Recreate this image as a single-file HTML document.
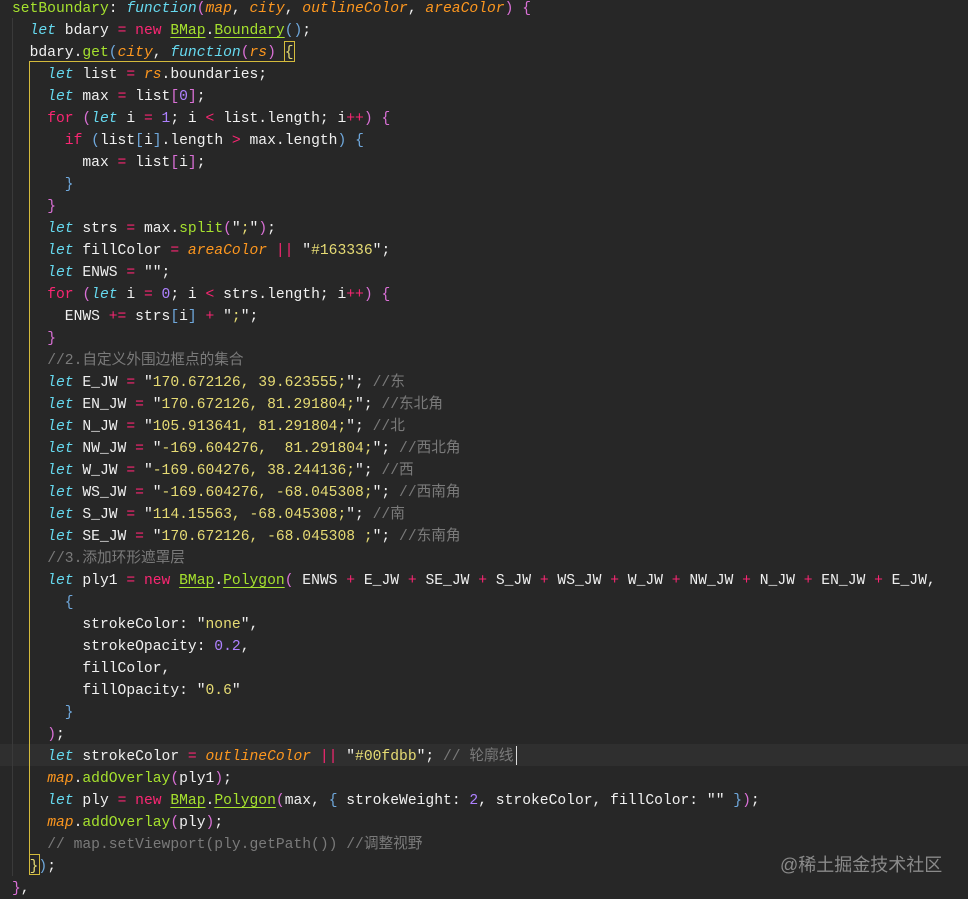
<!DOCTYPE html>
<html><head><meta charset="utf-8"><style>
html,body{margin:0;padding:0;background:#272727;width:968px;height:899px;overflow:hidden;position:relative}
pre{margin:0;position:absolute;left:12px;top:-2px;font-family:"Liberation Mono","Noto Sans CJK SC",monospace;font-size:14.67px;line-height:22px;color:#f0f0f0}
.k{color:#66d9ef;font-style:italic}
.p{color:#f92672}
.a{color:#fd971f;font-style:italic}
.g{color:#a6e22e}
.u{color:#a6e22e;text-decoration:underline;text-underline-offset:3px}
.n{color:#ae81ff}
.s{color:#e6db74}
.c{color:#7a7a7a}
.b1{color:#da70d6}
.b2{color:#6fa8dc}
.hl{position:absolute;left:0;top:744px;width:968px;height:22px;background:#2f2f2f}
.box{position:absolute;left:29px;top:61px;width:264px;height:808px;border-left:1px solid #d4bb3c;border-top:1px solid #d4bb3c}
.g1{position:absolute;left:12px;top:18px;width:1px;height:858px;background:#3a3a3a}
.br{position:absolute;border:1px solid #d4bb3c}
.wm{position:absolute;left:780px;top:851px;font-family:"Liberation Sans","Noto Sans CJK SC",sans-serif;font-size:18px;color:#8a8a8a}
.cur{position:absolute;left:516px;top:746px;width:1px;height:19px;background:#ddd}
</style></head><body>
<div class="hl"></div>
<div class="g1"></div>
<div class="box"></div>
<div class="br" style="left:284px;top:41px;width:9px;height:19px"></div>
<div class="br" style="left:29px;top:854px;width:9px;height:19px"></div>
<div class="cur"></div>
<pre>
<span class="g">setBoundary</span>: <span class="k">function</span><span class="b1">(</span><span class="a">map</span>, <span class="a">city</span>, <span class="a">outlineColor</span>, <span class="a">areaColor</span><span class="b1">)</span> <span class="b1">{</span>
  <span class="k">let</span> bdary <span class="p">=</span> <span class="p">new</span> <span class="u">BMap</span>.<span class="u">Boundary</span><span class="b2">()</span>;
  bdary.<span class="g">get</span><span class="b2">(</span><span class="a">city</span>, <span class="k">function</span><span class="b1">(</span><span class="a">rs</span><span class="b1">)</span> <span class="s">{</span>
    <span class="k">let</span> list <span class="p">=</span> <span class="a">rs</span>.boundaries;
    <span class="k">let</span> max <span class="p">=</span> list<span class="b1">[</span><span class="n">0</span><span class="b1">]</span>;
    <span class="p">for</span> <span class="b1">(</span><span class="k">let</span> i <span class="p">=</span> <span class="n">1</span>; i <span class="p">&lt;</span> list.length; i<span class="p">++</span><span class="b1">)</span> <span class="b1">{</span>
      <span class="p">if</span> <span class="b2">(</span>list<span class="b2">[</span>i<span class="b2">]</span>.length <span class="p">&gt;</span> max.length<span class="b2">)</span> <span class="b2">{</span>
        max <span class="p">=</span> list<span class="b1">[</span>i<span class="b1">]</span>;
      <span class="b2">}</span>
    <span class="b1">}</span>
    <span class="k">let</span> strs <span class="p">=</span> max.<span class="g">split</span><span class="b1">(</span>"<span class="s">;</span>"<span class="b1">)</span>;
    <span class="k">let</span> fillColor <span class="p">=</span> <span class="a">areaColor</span> <span class="p">||</span> "<span class="s">#163336</span>";
    <span class="k">let</span> ENWS <span class="p">=</span> "";
    <span class="p">for</span> <span class="b1">(</span><span class="k">let</span> i <span class="p">=</span> <span class="n">0</span>; i <span class="p">&lt;</span> strs.length; i<span class="p">++</span><span class="b1">)</span> <span class="b1">{</span>
      ENWS <span class="p">+=</span> strs<span class="b2">[</span>i<span class="b2">]</span> <span class="p">+</span> "<span class="s">;</span>";
    <span class="b1">}</span>
    <span class="c">//2.自定义外围边框点的集合</span>
    <span class="k">let</span> E_JW <span class="p">=</span> "<span class="s">170.672126, 39.623555;</span>"; <span class="c">//东</span>
    <span class="k">let</span> EN_JW <span class="p">=</span> "<span class="s">170.672126, 81.291804;</span>"; <span class="c">//东北角</span>
    <span class="k">let</span> N_JW <span class="p">=</span> "<span class="s">105.913641, 81.291804;</span>"; <span class="c">//北</span>
    <span class="k">let</span> NW_JW <span class="p">=</span> "<span class="s">-169.604276,  81.291804;</span>"; <span class="c">//西北角</span>
    <span class="k">let</span> W_JW <span class="p">=</span> "<span class="s">-169.604276, 38.244136;</span>"; <span class="c">//西</span>
    <span class="k">let</span> WS_JW <span class="p">=</span> "<span class="s">-169.604276, -68.045308;</span>"; <span class="c">//西南角</span>
    <span class="k">let</span> S_JW <span class="p">=</span> "<span class="s">114.15563, -68.045308;</span>"; <span class="c">//南</span>
    <span class="k">let</span> SE_JW <span class="p">=</span> "<span class="s">170.672126, -68.045308 ;</span>"; <span class="c">//东南角</span>
    <span class="c">//3.添加环形遮罩层</span>
    <span class="k">let</span> ply1 <span class="p">=</span> <span class="p">new</span> <span class="u">BMap</span>.<span class="u">Polygon</span><span class="b1">(</span> ENWS <span class="p">+</span> E_JW <span class="p">+</span> SE_JW <span class="p">+</span> S_JW <span class="p">+</span> WS_JW <span class="p">+</span> W_JW <span class="p">+</span> NW_JW <span class="p">+</span> N_JW <span class="p">+</span> EN_JW <span class="p">+</span> E_JW,
      <span class="b2">{</span>
        strokeColor: "<span class="s">none</span>",
        strokeOpacity: <span class="n">0.2</span>,
        fillColor,
        fillOpacity: "<span class="s">0.6</span>"
      <span class="b2">}</span>
    <span class="b1">)</span>;
    <span class="k">let</span> strokeColor <span class="p">=</span> <span class="a">outlineColor</span> <span class="p">||</span> "<span class="s">#00fdbb</span>"; <span class="c">// 轮廓线</span>
    <span class="a">map</span>.<span class="g">addOverlay</span><span class="b1">(</span>ply1<span class="b1">)</span>;
    <span class="k">let</span> ply <span class="p">=</span> <span class="p">new</span> <span class="u">BMap</span>.<span class="u">Polygon</span><span class="b1">(</span>max, <span class="b2">{</span> strokeWeight: <span class="n">2</span>, strokeColor, fillColor: "" <span class="b2">}</span><span class="b1">)</span>;
    <span class="a">map</span>.<span class="g">addOverlay</span><span class="b1">(</span>ply<span class="b1">)</span>;
    <span class="c">// map.setViewport(ply.getPath()) //调整视野</span>
  <span class="s">}</span><span class="b2">)</span>;
<span class="b1">}</span>,
</pre>
<div class="wm">@稀土掘金技术社区</div>
</body></html>
